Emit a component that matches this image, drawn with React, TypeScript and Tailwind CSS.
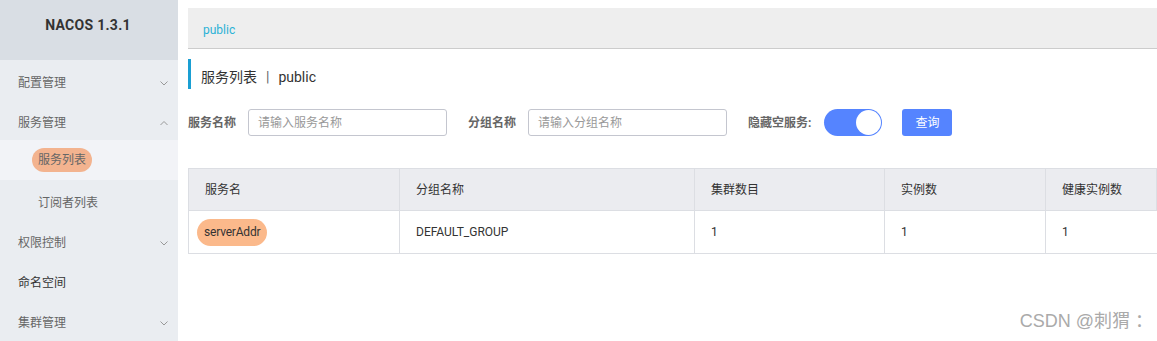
import React from 'react';

const font = { fontFamily: 'Roboto, "Noto Sans CJK SC", sans-serif' };

const Chevron: React.FC<{ up?: boolean }> = ({ up }) => (
  <svg width="10" height="10" viewBox="0 0 10 10" className="text-[#999]">
    <path d={up ? 'M1.5 7 L5 3.5 L8.5 7' : 'M1.5 3.5 L5 7 L8.5 3.5'} fill="none" stroke="currentColor" strokeWidth="1" />
  </svg>
);

const MenuItem: React.FC<{ label: string; chevron?: 'up' | 'down'; dark?: boolean }> = ({ label, chevron, dark }) => (
  <div className="h-10 shrink-0 flex items-center justify-between pl-[18px] pr-[9px]">
    <span className={`text-[12px] ${dark ? 'text-[#333]' : 'text-[#666]'}`}>{label}</span>
    {chevron && <Chevron up={chevron === 'up'} />}
  </div>
);

const cols = [
  { title: '服务名', w: 'w-[211px]' },
  { title: '分组名称', w: 'w-[295px]' },
  { title: '集群数目', w: 'w-[190px]' },
  { title: '实例数', w: 'w-[161px]' },
  { title: '健康实例数', w: 'flex-1' },
];

const App: React.FC = () => {
  return (
    <div className="w-[1157px] h-[341px] flex bg-white overflow-hidden relative" style={font}>
      <aside className="w-[178px] shrink-0 bg-[#eaedf1] flex flex-col overflow-hidden">
        <div className="h-[60px] shrink-0 bg-[#d9dee4] flex items-center justify-center pr-[2px] pb-[9px]">
          <span className="text-[14px] font-bold text-[#333] tracking-[0.3px]">NACOS 1.3.1</span>
        </div>
        <div className="h-[3px] shrink-0" />
        <MenuItem label="配置管理" chevron="down" />
        <MenuItem label="服务管理" chevron="up" />
        <div className="h-10 shrink-0 bg-[#f2f3f7] flex items-center pl-[32px] -mt-[3px]">
          <span className="text-[12px] text-[#666] bg-[#f3b38f] rounded-full px-[6px] h-[24px] leading-[24px]">服务列表</span>
        </div>
        <div className="h-[43px] shrink-0 flex items-center pl-[38px] pt-[3px]">
          <span className="text-[12px] text-[#666]">订阅者列表</span>
        </div>
        <MenuItem label="权限控制" chevron="down" />
        <MenuItem label="命名空间" dark />
        <MenuItem label="集群管理" chevron="down" />
      </aside>

      <main className="flex-1 pl-[10px] pt-[8px] flex flex-col">
        <div className="h-[41px] bg-[#eeeeee] border-b border-[#cccccc] flex items-center pl-[15px] pt-[3px]">
          <span className="text-[12px] text-[#2bb2d6]">public</span>
        </div>

        <div className="mt-[10px] h-[30px] border-l-[3px] border-[#1a9fd3] flex items-center pl-[10px] pt-[6px] text-[14px] text-[#333]">
          <span>服务列表</span>
          <span className="mx-[9px] text-[#666]">|</span>
          <span>public</span>
        </div>

        <div className="mt-[20px] h-[27px] flex items-center text-[12px]">
          <span className="font-bold text-[#666] w-[60px]">服务名称</span>
          <div className="w-[199px] h-[27px] border border-[#c4c6cf] rounded-[3px] flex items-center pl-[9px] text-[#999]">请输入服务名称</div>
          <span className="font-bold text-[#666] ml-[21px] w-[60px]">分组名称</span>
          <div className="w-[199px] h-[27px] border border-[#c4c6cf] rounded-[3px] flex items-center pl-[9px] text-[#999]">请输入分组名称</div>
          <span className="font-bold text-[#666] ml-[21px]">隐藏空服务:</span>
          <div className="ml-[13px] w-[58px] h-[27px] rounded-full bg-[#5584ff] relative">
            <div className="absolute right-[1px] top-[1px] w-[25px] h-[25px] rounded-full bg-white" />
          </div>
          <div className="ml-[20px] w-[50px] h-[27px] rounded-[3px] bg-[#5584ff] text-white flex items-center justify-center">查询</div>
        </div>

        <div className="mt-[32px] border-t border-l border-[#dcdee3] text-[12px] text-[#333]">
          <div className="flex h-[42px] bg-[#ebecf0] border-b border-[#dcdee3]">
            {cols.map((c) => (
              <div key={c.title} className={`${c.w} border-r border-[#dcdee3] flex items-center pl-[16px] pt-[1px] text-[#333]`}>
                {c.title}
              </div>
            ))}
          </div>
          <div className="flex h-[43px] border-b border-[#dcdee3]">
            <div className="w-[211px] border-r border-[#dcdee3] flex items-center pl-[8px]">
              <span className="bg-[#fbb98b] rounded-full px-[7px] h-[27px] leading-[27px] tracking-[-0.2px]">serverAddr</span>
            </div>
            <div className="w-[295px] border-r border-[#dcdee3] flex items-center pl-[16px]">DEFAULT_GROUP</div>
            <div className="w-[190px] border-r border-[#dcdee3] flex items-center pl-[16px]">1</div>
            <div className="w-[161px] border-r border-[#dcdee3] flex items-center pl-[16px]">1</div>
            <div className="flex-1 flex items-center pl-[16px]">1</div>
          </div>
        </div>
      </main>

      <div className="absolute right-[4px] bottom-[6px] text-[18px] text-[#aaa]" style={{ fontFamily: '"Liberation Sans", "Noto Sans CJK SC", sans-serif' }}>
        CSDN @刺猬 ：
      </div>
    </div>
  );
};

export default App;
